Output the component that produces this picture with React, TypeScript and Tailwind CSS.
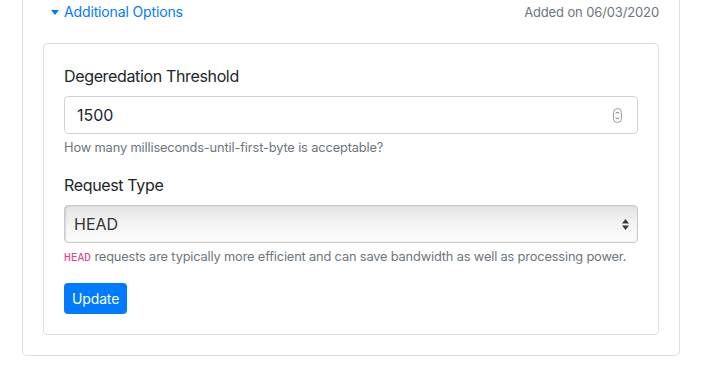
export default function App() {
  return (
    <div className="min-h-[365px] bg-white text-[#212529]" style={{ fontFamily: "Inter, 'Liberation Sans', sans-serif" }}>
      <div className="ml-[22px] w-[658px] border border-t-0 border-[#dfdfdf] rounded-b-[5px] px-5 pb-5">

        <div className="flex items-start justify-between h-[43px]">
          <button className="flex items-center gap-[5px] ml-[8px] mt-[2px] text-[#007bff] text-[14px] tracking-[-0.01em] leading-5">
            <svg width="8" height="5" viewBox="0 0 8 5">
              <path d="M0 0h8L4 5z" fill="#007bff" />
            </svg>
            Additional Options
          </button>
          <span className="mt-[2px] text-[13px] tracking-[-0.01em] leading-5 text-[#6c757d]">
            Added on 06/03/2020
          </span>
        </div>

        <div className="border border-[#dfdfdf] rounded-[4px] p-5">

          <div className="mb-4">
            <label className="block text-[16px] tracking-[-0.022em] leading-6 mb-2">
              Degeredation Threshold
            </label>
            <div className="flex items-center h-[38px] border border-[#ced4da] rounded-[4px] pl-3 pr-[15px]">
              <span className="flex-1 text-[16px]">1500</span>
              <div className="flex flex-col items-center justify-center w-[9px] h-[15px] border border-[#9a9a9a] rounded-full">
                <svg width="5" height="11" viewBox="0 0 5 11">
                  <path d="M0.8 3.6 2.5 1.9 4.2 3.6M0.8 7.4 2.5 9.1 4.2 7.4" fill="none" stroke="#555" strokeWidth="0.9" />
                </svg>
              </div>
            </div>
            <p className="mt-1 text-[12.8px] tracking-[-0.01em] leading-[19px] text-[#6c757d]">
              How many milliseconds-until-first-byte is acceptable?
            </p>
          </div>

          <div className="mb-4">
            <label className="block text-[16px] tracking-[-0.022em] leading-6 mb-2">
              Request Type
            </label>
            <div className="flex items-center h-[38px] border border-[#c9c9c9] rounded-[4px] pl-[9px] pr-[8px] bg-gradient-to-b from-[#e3e3e3] via-[#f4f4f4] to-[#fbfbfb] shadow-[inset_1px_0_2px_rgba(0,0,0,0.12)]">
              <span className="flex-1 text-[16px] text-[#333]">HEAD</span>
              <svg width="7" height="11" viewBox="0 0 7 11">
                <path d="M3.5 0 7 4.5H0z M3.5 11 7 6.5H0z" fill="#3a3a3a" />
              </svg>
            </div>
            <p className="mt-1 text-[12.8px] tracking-[-0.012em] leading-[19px] text-[#6c757d] whitespace-nowrap">
              <code className="text-[#e83e8c] text-[11.2px] tracking-normal" style={{ fontFamily: "'DejaVu Sans Mono', 'Liberation Mono', monospace" }}>HEAD</code>{" "}
              requests are typically more efficient and can save bandwidth as well as processing power.
            </p>
          </div>

          <button className="h-[31px] px-2 rounded-[4px] bg-[#007bff] text-white text-[14px] tracking-[-0.01em]">
            Update
          </button>

        </div>
      </div>
    </div>
  );
}
